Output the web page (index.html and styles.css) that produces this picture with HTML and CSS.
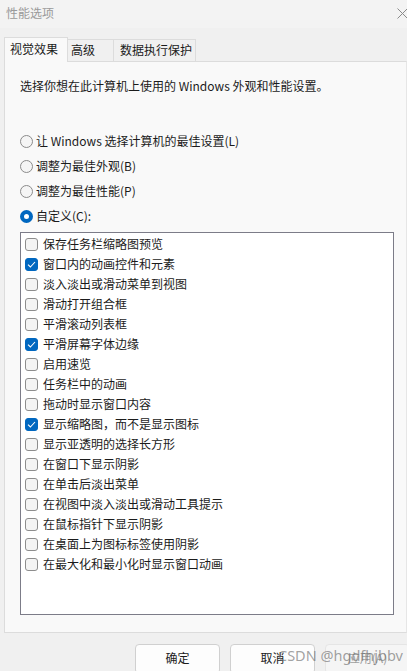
FILE: index.html
```html
<!DOCTYPE html>
<html lang="zh-CN">
<head>
<meta charset="utf-8">
<title>性能选项</title>
<link rel="stylesheet" href="styles.css">
</head>
<body>
<div class="window">
  <div class="titlebar">
    <span class="title">性能选项</span>
    <svg class="close" width="11" height="11" viewBox="0 0 11 11"><path d="M0.5 0.5L10.5 10.5M10.5 0.5L0.5 10.5" stroke="#8a8a8a" stroke-width="1"/></svg>
  </div>
  <div class="tabs">
    <div class="tab active">视觉效果</div>
    <div class="tab">高级</div>
    <div class="tab">数据执行保护</div>
  </div>
  <div class="panel">
    <p class="desc">选择你想在此计算机上使用的 Windows 外观和性能设置。</p>
    <div class="radios">
      <div class="radio-row"><span class="radio"></span>让 Windows 选择计算机的最佳设置(L)</div>
      <div class="radio-row"><span class="radio"></span>调整为最佳外观(B)</div>
      <div class="radio-row"><span class="radio"></span>调整为最佳性能(P)</div>
      <div class="radio-row"><span class="radio on"></span>自定义(C):</div>
    </div>
    <div class="listbox">
      <div class="item"><span class="cb"></span>保存任务栏缩略图预览</div>
      <div class="item"><span class="cb on"><svg width="9" height="7" viewBox="0 0 9 7"><path d="M1 3.6L3.4 6L8 1" fill="none" stroke="#fff" stroke-width="1.1"/></svg></span>窗口内的动画控件和元素</div>
      <div class="item"><span class="cb"></span>淡入淡出或滑动菜单到视图</div>
      <div class="item"><span class="cb"></span>滑动打开组合框</div>
      <div class="item"><span class="cb"></span>平滑滚动列表框</div>
      <div class="item"><span class="cb on"><svg width="9" height="7" viewBox="0 0 9 7"><path d="M1 3.6L3.4 6L8 1" fill="none" stroke="#fff" stroke-width="1.1"/></svg></span>平滑屏幕字体边缘</div>
      <div class="item"><span class="cb"></span>启用速览</div>
      <div class="item"><span class="cb"></span>任务栏中的动画</div>
      <div class="item"><span class="cb"></span>拖动时显示窗口内容</div>
      <div class="item"><span class="cb on"><svg width="9" height="7" viewBox="0 0 9 7"><path d="M1 3.6L3.4 6L8 1" fill="none" stroke="#fff" stroke-width="1.1"/></svg></span>显示缩略图，而不是显示图标</div>
      <div class="item"><span class="cb"></span>显示亚透明的选择长方形</div>
      <div class="item"><span class="cb"></span>在窗口下显示阴影</div>
      <div class="item"><span class="cb"></span>在单击后淡出菜单</div>
      <div class="item"><span class="cb"></span>在视图中淡入淡出或滑动工具提示</div>
      <div class="item"><span class="cb"></span>在鼠标指针下显示阴影</div>
      <div class="item"><span class="cb"></span>在桌面上为图标标签使用阴影</div>
      <div class="item"><span class="cb"></span>在最大化和最小化时显示窗口动画</div>
    </div>
  </div>
  <div class="buttons">
    <button class="btn">确定</button>
    <button class="btn">取消</button>
    <button class="btn disabled">应用(A)</button>
  </div>
  <div class="watermark">CSDN @hgdfhjbbv</div>
</div>
</body>
</html>
```
FILE: styles.css
```css
* { box-sizing: border-box; }
html, body {
  margin: 0;
  padding: 0;
  width: 407px;
  height: 671px;
  overflow: hidden;
  background: #f0f0f0;
}
body {
  font-family: "Noto Sans CJK SC", "Noto Sans", sans-serif;
  font-size: 12px;
  color: #1b1b1b;
}
.window {
  position: relative;
  width: 407px;
  height: 671px;
  overflow: hidden;
}
.titlebar {
  height: 28px;
  background: #f3f3f3;
  display: flex;
  align-items: center;
  justify-content: space-between;
  padding: 0 0 2px 6px;
}
.title {
  color: #9a9a9a;
  font-size: 12px;
  line-height: 16px;
}
.close {
  margin-right: -1px;
  margin-top: 1px;
  flex: none;
}
.tabs {
  display: flex;
  align-items: flex-end;
  padding: 9px 0 0 4px;
  height: 33px;
}
.tab {
  height: 22px;
  line-height: 20px;
  padding: 0 6px;
  border: 1px solid #dcdcdc;
  border-bottom: none;
  background: #f0f0f0;
  margin-left: -1px;
  font-size: 12px;
  white-space: nowrap;
}
.tab:nth-child(2) { width: 47px; padding-left: 3px; }
.tab:nth-child(3) { width: 83px; padding-left: 6px; }
.tab.active {
  height: 25px;
  width: 64px;
  margin-left: 0;
  margin-bottom: -1px;
  background: #f9f9f9;
  padding: 1px 0 0 5px;
  line-height: 20px;
  position: relative;
  z-index: 1;
}
.panel {
  margin-left: 4px;
  width: 403px;
  height: 572px;
  background: #f9f9f9;
  border: 1px solid #dcdcdc;
  border-right: 1px solid #e6e6e6;
  padding: 15px 0 0 15px;
}
.desc {
  margin: 0;
  line-height: 18px;
  height: 18px;
}
.radios {
  margin-top: 37px;
  display: flex;
  flex-direction: column;
  gap: 7px;
}
.radio-row {
  display: flex;
  align-items: center;
  height: 18px;
  line-height: 18px;
}
.radio {
  width: 13px;
  height: 13px;
  border-radius: 50%;
  border: 1px solid #8b8b8b;
  background: #f5f5f5;
  margin-right: 3px;
  flex: none;
}
.radio.on {
  border: 4px solid #0067c0;
  background: #ffffff;
}
.listbox {
  margin-top: 7px;
  width: 374px;
  height: 383px;
  background: #ffffff;
  border: 1px solid #7c7c88;
  padding: 1px 0 0 4px;
}
.item {
  display: flex;
  align-items: center;
  height: 20px;
  line-height: 20px;
  white-space: nowrap;
}
.cb {
  width: 13px;
  height: 13px;
  border-radius: 3px;
  border: 1px solid #8d8d8d;
  background: #f4f4f4;
  margin-right: 5px;
  flex: none;
  display: flex;
  align-items: center;
  justify-content: center;
}
.cb.on {
  background: #0067c0;
  border-color: #0067c0;
}
.buttons {
  display: flex;
  gap: 10px;
  padding: 11px 0 0 135px;
  width: 407px;
  overflow: hidden;
}
.btn {
  flex: none;
  width: 85px;
  height: 30px;
  border: 1px solid #d0d0d0;
  border-radius: 4px;
  background: #fdfdfd;
  font-family: "Noto Sans CJK SC", "Noto Sans", sans-serif;
  font-size: 12px;
  color: #1b1b1b;
  padding: 0 0 3px 0;
}
.btn.disabled {
  background: #f5f5f5;
  border-color: #e5e5e5;
  color: #a0a0a0;
}
.watermark {
  position: absolute;
  left: 278px;
  top: 645px;
  font-family: "Noto Sans", "DejaVu Sans", sans-serif;
  font-size: 14.5px;
  line-height: 20px;
  color: rgba(110, 110, 110, 0.65);
  white-space: nowrap;
}
```
